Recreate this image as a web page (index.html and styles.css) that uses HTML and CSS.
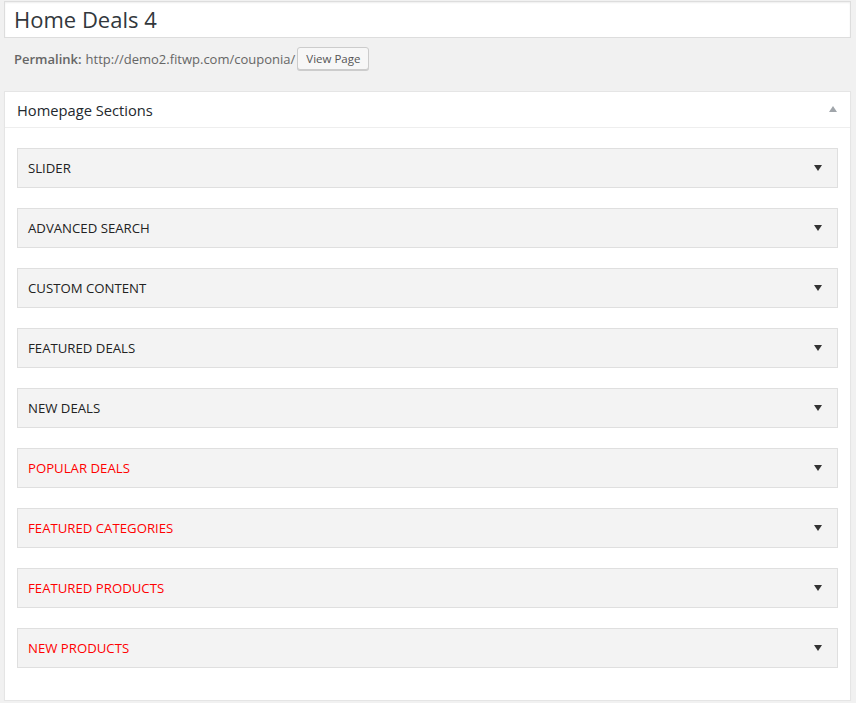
FILE: index.html
```html
<!DOCTYPE html>
<html>
<head>
<meta charset="utf-8">
<link rel="stylesheet" href="styles.css">
</head>
<body>
<div class="wrap">
  <div class="title-box">Home Deals 4</div>
  <div class="permalink">
    <span class="perm-label">Permalink:</span>
    <span class="perm-url">http://demo2.fitwp.com/couponia/</span>
    <span class="btn">View Page</span>
  </div>
  <div class="postbox">
    <div class="postbox-head">
      <span class="postbox-title">Homepage Sections</span>
      <span class="arrow-up"></span>
    </div>
    <div class="postbox-inside">
      <div class="section"><span>SLIDER</span><span class="arrow-down"></span></div>
      <div class="section"><span>ADVANCED SEARCH</span><span class="arrow-down"></span></div>
      <div class="section"><span>CUSTOM CONTENT</span><span class="arrow-down"></span></div>
      <div class="section"><span>FEATURED DEALS</span><span class="arrow-down"></span></div>
      <div class="section"><span>NEW DEALS</span><span class="arrow-down"></span></div>
      <div class="section red"><span>POPULAR DEALS</span><span class="arrow-down"></span></div>
      <div class="section red"><span>FEATURED CATEGORIES</span><span class="arrow-down"></span></div>
      <div class="section red"><span>FEATURED PRODUCTS</span><span class="arrow-down"></span></div>
      <div class="section red"><span>NEW PRODUCTS</span><span class="arrow-down"></span></div>
    </div>
  </div>
</div>
</body>
</html>
```

FILE: styles.css
```css
html, body {
  margin: 0;
  padding: 0;
  background: #f1f1f1;
  font-family: "Open Sans", "Liberation Sans", sans-serif;
  color: #23282d;
}
.wrap {
  padding: 1px 5px 0 4px;
}
.title-box {
  box-sizing: border-box;
  height: 37px;
  background: #fff;
  border: 1px solid #ddd;
  box-shadow: inset 0 1px 2px rgba(0,0,0,.07);
  font-size: 22px;
  line-height: 35px;
  padding: 0 9px;
  color: #32373c;
}
.permalink {
  display: flex;
  align-items: center;
  height: 23px;
  margin-top: 9px;
  padding-left: 10px;
  font-size: 13px;
  color: #666;
}
.perm-label {
  font-weight: 600;
  margin-right: 4px;
}
.btn {
  box-sizing: border-box;
  height: 23px;
  line-height: 21px;
  margin-left: 2px;
  padding: 0 8px;
  font-size: 11.5px;
  color: #555;
  background: #f7f7f7;
  border: 1px solid #ccc;
  border-radius: 3px;
  box-shadow: 0 1px 0 #ccc;
}
.postbox {
  margin-top: 21px;
  background: #fff;
  border: 1px solid #e5e5e5;
  box-shadow: 0 1px 1px rgba(0,0,0,.04);
}
.postbox-head {
  display: flex;
  align-items: center;
  justify-content: space-between;
  height: 35px;
  padding: 0 13px 0 12px;
  border-bottom: 1px solid #eee;
}
.postbox-title {
  font-size: 14.7px;
  color: #23282d;
}
.arrow-up {
  width: 0;
  height: 0;
  border-left: 4px solid transparent;
  border-right: 4px solid transparent;
  border-bottom: 6px solid #a0a5aa;
  margin-top: -1px;
}
.postbox-inside {
  display: flex;
  flex-direction: column;
  gap: 20px;
  padding: 20px 12px 32px 12px;
}
.section {
  box-sizing: border-box;
  height: 40px;
  display: flex;
  align-items: center;
  justify-content: space-between;
  padding: 0 15px 0 10px;
  background: #f3f3f3;
  border: 1px solid #dfdfdf;
  font-size: 13.2px;
  color: #222;
}
.section.red {
  color: #ff0000;
}
.arrow-down {
  width: 0;
  height: 0;
  border-left: 4px solid transparent;
  border-right: 4px solid transparent;
  border-top: 6px solid #333;
  margin-top: -1px;
}
```
